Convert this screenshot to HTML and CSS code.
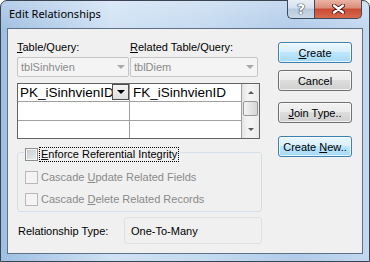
FILE: index.html
```html
<!DOCTYPE html>
<html lang="en">
<head>
    <meta charset="UTF-8">
    <title>Edit Relationships</title>
    <link rel="stylesheet" href="styles.css">
</head>
<body>
    <div class="window">
        <div class="titlebar">
            <span class="title">Edit Relationships</span>
            <div class="caps">
                <div class="cap help">?</div>
                <div class="cap close">
                    <svg width="13" height="10" viewBox="0 0 13 10">
                        <path d="M2 1.5 L11 8.5 M11 1.5 L2 8.5" stroke="#5a1a10" stroke-width="4.2" stroke-linecap="round"/>
                        <path d="M2 1.5 L11 8.5 M11 1.5 L2 8.5" stroke="#fff" stroke-width="2.4" stroke-linecap="round"/>
                    </svg>
                </div>
            </div>
        </div>

        <div class="client">
            <div class="left">
                <div class="pickers">
                    <div class="picker p1">
                        <div class="lbl"><u>T</u>able/Query:</div>
                        <div class="combo">tblSinhvien<span class="arrow"></span></div>
                    </div>
                    <div class="picker p2">
                        <div class="lbl"><u>R</u>elated Table/Query:</div>
                        <div class="combo">tblDiem<span class="arrow"></span></div>
                    </div>
                </div>

                <div class="grid">
                    <div class="rows">
                        <div class="row r1">
                            <div class="cell c1"><span class="txt">PK_iSinhvienID</span><span class="ddbtn"><span class="tri"></span></span></div>
                            <div class="cell c2"><span class="txt">FK_iSinhvienID</span></div>
                        </div>
                        <div class="row r2">
                            <div class="cell c1"></div>
                            <div class="cell c2"></div>
                        </div>
                        <div class="row r3">
                            <div class="cell c1"></div>
                            <div class="cell c2"></div>
                        </div>
                    </div>
                    <div class="vscroll">
                        <div class="sbtn"><span class="up"></span></div>
                        <div class="thumb"></div>
                        <div class="track"></div>
                        <div class="sbtn"><span class="down"></span></div>
                    </div>
                </div>

                <div class="group">
                    <div class="chk-row first">
                        <span class="chk"></span>
                        <span class="chk-label focus"><u>E</u>nforce Referential Integrity</span>
                    </div>
                    <div class="chk-row off second">
                        <span class="chk"></span>
                        <span class="chk-label">Cascade <u>U</u>pdate Related Fields</span>
                    </div>
                    <div class="chk-row off third">
                        <span class="chk"></span>
                        <span class="chk-label">Cascade <u>D</u>elete Related Records</span>
                    </div>
                </div>

                <div class="reltype">
                    <span class="reltype-label">Relationship Type:</span>
                    <div class="reltype-box">One-To-Many</div>
                </div>
            </div>

            <div class="buttons">
                <button class="btn blue b-create"><u>C</u>reate</button>
                <button class="btn b-cancel">Cancel</button>
                <button class="btn b-join"><u>J</u>oin Type..</button>
                <button class="btn blue b-new">Create <u>N</u>ew..</button>
            </div>
        </div>
    </div>
</body>
</html>
```

FILE: styles.css
```css
body {
    margin: 0;
    font-family: "Liberation Sans", Arial, sans-serif;
    font-size: 11px;
    color: #000;
    background: #fff;
}
.window {
    width: 370px;
    height: 262px;
    box-sizing: border-box;
    border: 1px solid #3a4452;
    border-radius: 7px 7px 0 0;
    background:
        linear-gradient(rgba(255, 255, 255, 0.25), rgba(255, 255, 255, 0) 30px),
        linear-gradient(to right, #9fbfe2, #cfe1f4 30%, #c4daf0 55%, #b1cbe9 80%, #c3d8ef);
    display: flex;
    flex-direction: column;
}
.titlebar {
    height: 27px;
    flex-shrink: 0;
    display: flex;
    align-items: flex-start;
}
.title {
    font-family: "Noto Sans", sans-serif;
    font-size: 11px;
    line-height: 15px;
    margin: 5px 0 0 8px;
    color: #000;
}
.caps {
    display: flex;
    margin: -1px 7px 0 auto;
}
.cap {
    box-sizing: border-box;
    height: 19px;
    border: 1px solid #3b4a5c;
    border-top: none;
    display: flex;
    align-items: center;
    justify-content: center;
}
.help {
    width: 27px;
    border-right: none;
    border-radius: 0 0 0 5px;
    background: linear-gradient(#e8eef5, #d5e0ec 45%, #b6c8dc 50%, #cad9e9);
    font-family: "DejaVu Sans", sans-serif;
    font-weight: bold;
    font-size: 14px;
    line-height: 17px;
    color: #fff;
    text-shadow: 0 0 1px #2c3a4a, 0 0 1px #2c3a4a, 0 0 1px #2c3a4a;
}
.close {
    width: 48px;
    border-radius: 0 0 5px 0;
    background: linear-gradient(#ebb3a5, #dc8c78 45%, #c84a31 50%, #d9694d);
}
.client {
    flex: 1;
    margin: 0 6px 7px;
    border: 1px solid #5f7189;
    background: #f0f0f0;
    display: flex;
    padding: 12px 0 0 9px;
}
.left {
    width: 245px;
}
.pickers {
    display: flex;
}
.p1 {
    width: 113px;
}
.p1 .combo {
    width: 112px;
}
.p2 {
    width: 128px;
}
.lbl {
    line-height: 13px;
    margin-bottom: 3px;
    white-space: nowrap;
}
.combo {
    box-sizing: border-box;
    height: 20px;
    border: 1px solid #c3c6c9;
    border-radius: 2px;
    background: #f4f4f4;
    color: #8a8a8a;
    padding-left: 3px;
    line-height: 18px;
    display: flex;
    align-items: center;
}
.arrow {
    margin: 0 3px 0 auto;
    width: 0;
    height: 0;
    border-left: 4px solid transparent;
    border-right: 4px solid transparent;
    border-top: 4px solid #a9a9a9;
}
.grid {
    margin-top: 6px;
    width: 243px;
    height: 56px;
    box-sizing: border-box;
    border: 1px solid #646464;
    background: #fff;
    display: flex;
}
.rows {
    width: 224px;
}
.row {
    display: flex;
    box-sizing: border-box;
    border-bottom: 1px solid #a0a0a0;
}
.r1 { height: 18px; }
.r2 { height: 19px; }
.r3 { height: 17px; border-bottom: none; }
.cell {
    box-sizing: border-box;
    width: 112px;
    border-right: 1px solid #a0a0a0;
    display: flex;
    overflow: hidden;
    white-space: nowrap;
    font-size: 13.5px;
    line-height: 17px;
}
.c1 .txt {
    padding-left: 2px;
}
.c2 .txt {
    padding-left: 3px;
}
.txt {
    flex: 1;
    overflow: hidden;
}
.ddbtn {
    flex-shrink: 0;
    width: 17px;
    height: 16px;
    box-sizing: border-box;
    border: 1px solid #4f4f4f;
    background: linear-gradient(#f4f4f4, #dedede);
    display: flex;
    align-items: center;
    justify-content: center;
}
.tri {
    width: 0;
    height: 0;
    border-left: 4px solid transparent;
    border-right: 4px solid transparent;
    border-top: 4px solid #000;
}
.vscroll {
    width: 17px;
    display: flex;
    flex-direction: column;
    background: linear-gradient(to right, #e3e3e3, #f2f2f2 30%, #f2f2f2 70%, #e8e8e8);
}
.sbtn {
    height: 17px;
    display: flex;
    align-items: center;
    justify-content: center;
}
.up, .down {
    width: 0;
    height: 0;
    border-left: 3px solid transparent;
    border-right: 3px solid transparent;
}
.up {
    border-bottom: 3px solid #5a5a5a;
}
.down {
    border-top: 3px solid #5a5a5a;
}
.thumb {
    height: 15px;
    margin: 0 1px;
    box-sizing: border-box;
    border: 1px solid #989898;
    border-radius: 2px;
    background: linear-gradient(to right, #f3f3f3, #e4e4e4 50%, #d6d6d6);
}
.track {
    flex: 1;
}
.group {
    margin-top: 13px;
    width: 245px;
    height: 60px;
    box-sizing: border-box;
    border: 1px solid #d5dfe5;
    border-radius: 3px;
    padding: 0 0 0 6px;
    display: flex;
    flex-direction: column;
    align-items: flex-start;
}
.chk-row {
    display: flex;
    align-items: center;
    height: 15px;
    padding: 0 1px;
}
.first {
    margin-top: -6px;
    background: #f0f0f0;
}
.second {
    margin-top: 8px;
}
.third {
    margin-top: 7px;
}
.chk {
    width: 13px;
    height: 13px;
    box-sizing: border-box;
    border: 1px solid #8e8f8f;
    box-shadow: inset 0 0 0 1px #f4f4f4;
    background: linear-gradient(135deg, #c4c8ce, #eeeeef);
}
.chk-label {
    margin-left: 1px;
    padding: 0 1px;
    border: 1px solid transparent;
    line-height: 13px;
    white-space: nowrap;
}
.focus {
    border: 1px dotted #000;
}
.off {
    color: #8a8a8a;
}
.off .chk {
    border-color: #b8b8b8;
    background: #f4f4f4;
    box-shadow: none;
}
.reltype {
    display: flex;
    align-items: center;
    margin-top: 5px;
    padding-left: 1px;
}
.reltype-label {
    width: 106px;
}
.reltype-box {
    width: 138px;
    height: 27px;
    box-sizing: border-box;
    border: 1px solid #dde1e5;
    border-radius: 3px;
    padding-left: 6px;
    display: flex;
    align-items: center;
}
.buttons {
    margin-left: 16px;
    width: 74px;
    display: flex;
    flex-direction: column;
}
.btn {
    height: 21px;
    padding: 0;
    box-sizing: border-box;
    border: 1px solid #707070;
    border-radius: 3px;
    background: linear-gradient(#f2f2f2, #ebebeb 45%, #dddddd 50%, #cfcfcf);
    box-shadow: inset 0 0 0 1px rgba(255, 255, 255, 0.7);
    font-family: inherit;
    font-size: 11px;
    color: #000;
}
.blue {
    border-color: #3c7fb1;
    background: linear-gradient(#eaf6fd, #d9f0fc 45%, #bee6fd 50%, #a7d9f5);
}
.b-create { margin-top: 1px; }
.b-cancel { margin-top: 7px; }
.b-join { margin-top: 11px; }
.b-new { margin-top: 13px; }
```
